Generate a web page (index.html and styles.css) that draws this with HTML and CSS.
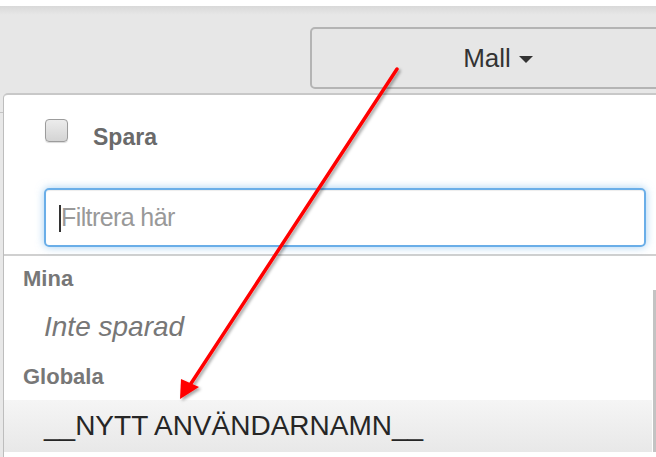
FILE: index.html
```html
<!DOCTYPE html>
<html lang="sv">
<head>
    <meta charset="UTF-8">
    <title>Mall</title>
    <link rel="stylesheet" href="styles.css">
</head>
<body>
    <div class="topbar">
        <button class="btn-mall">Mall <span class="caret"></span></button>
    </div>
    <div class="page">
        <div class="dropdown">
            <div class="save-row">
                <span class="check"></span>
                <span class="save-label">Spara</span>
            </div>
            <div class="filter">
                <div class="search"><span class="cursor"></span><span class="placeholder">Filtrera här</span></div>
            </div>
            <div class="list-wrap">
                <ul class="list">
                    <li class="header">Mina</li>
                    <li class="item empty">Inte sparad</li>
                    <li class="header">Globala</li>
                    <li class="item active">__NYTT ANVÄNDARNAMN__</li>
                </ul>
                <div class="scrollbar"><div class="thumb"></div></div>
            </div>
        </div>
    </div>
    <!-- pil som pekar på mallen -->
    <svg class="arrow" width="656" height="457" viewBox="0 0 656 457">
        <defs>
            <filter id="shadow" x="-20%" y="-20%" width="140%" height="140%">
                <feDropShadow dx="2" dy="2" stdDeviation="1.5" flood-color="#000" flood-opacity="0.35"/>
            </filter>
        </defs>
        <g filter="url(#shadow)">
            <line x1="397" y1="69" x2="190" y2="385" stroke="#ff0000" stroke-width="3.5" stroke-linecap="round"/>
            <polygon points="180,399 181,379 199,387" fill="#ff0000"/>
        </g>
    </svg>
</body>
</html>
```

FILE: styles.css
```css
*{
    margin: 0;
    padding: 0;
    box-sizing: border-box;
}
html,body{
    width: 656px;
    height: 457px;
    overflow: hidden;
    background: #fff;
    font-family: "Liberation Sans", Arial, sans-serif;
}
body{
    padding-top: 6px;
}
li{
    list-style: none;
}
.topbar{
    height: 87px;
    padding: 21px 0 0 310px;
    background: linear-gradient(#d9d9d9 0, #e7e7e7 9px, #e7e7e7 100%);
    overflow: hidden;
}
.btn-mall{
    display: flex;
    align-items: center;
    justify-content: center;
    gap: 8px;
    width: 376px;
    height: 62px;
    border: 2px solid #b4b4b4;
    border-radius: 5px;
    background: #e6e6e6;
    color: #333;
    font-family: inherit;
    font-size: 26px;
}
.caret{
    width: 0;
    height: 0;
    border-left: 7px solid transparent;
    border-right: 7px solid transparent;
    border-top: 7px solid #333;
    margin-top: 3px;
}
.page{
    height: 364px;
    padding-left: 3px;
    background: #e8e8e8 linear-gradient(#c4c4c4, #c4c4c4) no-repeat;
    background-size: 3px 1px;
    background-position: 0 19px;
}
.dropdown{
    height: 100%;
    overflow: hidden;
    background: #fff;
    border-top: 2px solid #c8c8c8;
    border-left: 1px solid #bdbdbd;
    border-top-left-radius: 5px;
}
.save-row{
    display: flex;
    align-items: flex-start;
    padding: 24px 0 0 41px;
}
.check{
    width: 23px;
    height: 23px;
    border: 1px solid #9c9c9c;
    border-radius: 4px;
    background: linear-gradient(#ececec, #d4d4d4);
    box-shadow: 0 1px 1px rgba(0,0,0,.15);
}
.save-label{
    margin: 3px 0 0 25px;
    line-height: 30px;
    font-size: 23px;
    font-weight: bold;
    color: #6a6a6a;
}
.filter{
    padding: 36px 0 7px 40px;
    border-bottom: 2px solid #d0d0d0;
}
.search{
    display: flex;
    align-items: center;
    width: 602px;
    height: 59px;
    padding-left: 14px;
    border: 2px solid #6aaee8;
    border-radius: 5px;
    box-shadow: inset 0 1px 1px rgba(0,0,0,.075), 0 0 8px rgba(102,175,233,.6);
}
.cursor{
    width: 2px;
    height: 27px;
    margin: 2px 0 0 -1px;
    background: #333;
}
.placeholder{
    font-size: 25px;
    letter-spacing: -0.6px;
    color: #999;
}
.list-wrap{
    display: flex;
}
.list{
    flex: 1;
    padding-top: 8px;
}
.header{
    padding-left: 19px;
    line-height: 30px;
    font-size: 22px;
    font-weight: bold;
    color: #777;
}
.item{
    padding-left: 40px;
    line-height: 40px;
    font-size: 28px;
    color: #262626;
}
.item.empty{
    margin: 13px 0 15px;
    font-style: italic;
    color: #777;
}
.item.active{
    margin-top: 8px;
    line-height: 52px;
    background: linear-gradient(#f5f5f5, #e8e8e8);
}
.scrollbar{
    width: 4px;
    padding: 34px 0 0 1px;
}
.thumb{
    height: 162px;
    background: #c3c3c3;
}
.arrow{
    position: absolute;
    left: 0;
    top: 0;
    pointer-events: none;
}
```
